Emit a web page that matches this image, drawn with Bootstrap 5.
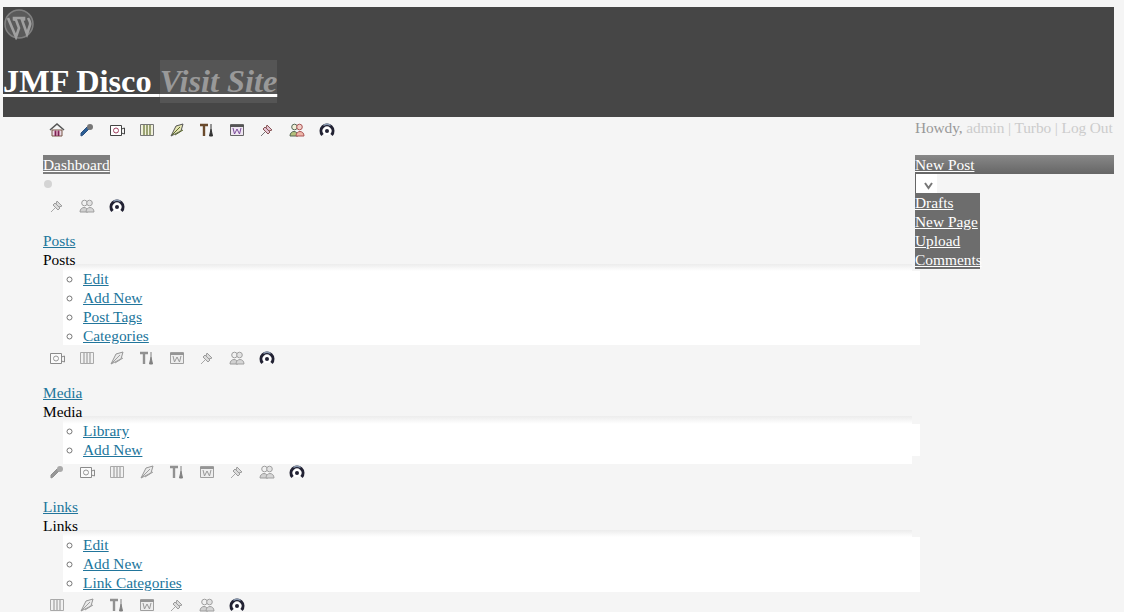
<!DOCTYPE html>
<html lang="en">
<head>
  <meta charset="UTF-8">
  <title>JMF Disco</title>
  <meta name="viewport" content="width=device-width, initial-scale=1">
  <link href="https://cdn.jsdelivr.net/npm/bootstrap@5.3.3/dist/css/bootstrap.min.css" rel="stylesheet">
  <style>
    html, body { height: 612px; overflow: hidden; }
    body { background: #f5f5f5; color: #000; font: 15.4px/19px "Liberation Serif", "Times New Roman", serif; padding: 7px 10px 0 3px; }
    a { color: #21759b; }
    .wp-head { background: #464646; height: 110px; padding-top: 1px; }
    .wp-logo { display: block; width: 32px; height: 32px; }
    .wp-title { color: #fff; font: bold 32.3px/37px "Liberation Serif", serif; margin: 23px 0 0; }
    .wp-title a { color: #fff; }
    .wp-visit { background: #555; color: #999; font-style: italic; padding: 3px 0 4px; }
    .wp-left { width: 917px; margin-right: -5px; padding-left: 40px; flex: none; }
    .wp-right { width: 199px; flex: none; position: relative; color: #999; }
    .wp-icons { height: 26px; padding-left: 6px; gap: 14px; align-items: center; }
    .wp-icons svg { width: 16px; height: 16px; flex: none; }
    .wp-muted svg:not(:last-child) { filter: grayscale(1) opacity(.6); }
    .wp-sect { margin-top: 12px; }
    .wp-sub { margin: -5px 0 0 20px; padding: 5px 0 0 20px; list-style: circle;
      background: linear-gradient(#ececec, #fff) no-repeat 0 0 / calc(100% - 8px) 7px,
                  linear-gradient(#fff, #fff) no-repeat 0 7px / 100% 100%; }
    .wp-sub-media { margin-bottom: -5px; padding-bottom: 5px;
      background: linear-gradient(#ececec, #fff) no-repeat 0 0 / calc(100% - 8px) 8px,
                  linear-gradient(#fff, #fff) no-repeat 0 8px / 100% calc(100% - 16px),
                  linear-gradient(#fff, #fff) no-repeat 0 100% / calc(100% - 8px) 8px; }
    .wp-sub li::marker { color: #777; }
    .wp-current { background: #7d7d7d; color: #fff; display: inline-block; }
    .wp-dot { width: 8px; height: 8px; background: #d4d4d4; border-radius: 50%; margin: 6px 0 5px 1px; }
    .wp-howdy { height: 38px; padding-top: 1px; white-space: nowrap; letter-spacing: -.1px; }
    .wp-howdy a { color: #ccc; text-decoration: none; }
    .wp-sep { color: #ccc; }
    .wp-newpost { background: linear-gradient(#888, #666); height: 19px; }
    .wp-newpost a, .wp-menu a { color: #fff; }
    .wp-toggle { background: #fff; border-left: 1px solid #666; width: 22px; height: 19px; padding: 8px 0 0 8px; }
    .wp-toggle svg { display: block; width: 9px; height: 8px; }
    .wp-menu { background: #6d6d6d; width: 65px; white-space: nowrap; }
  </style>
</head>
<body>
  <!-- icon set, used by the rows below -->
  <svg width="0" height="0" class="position-absolute">
    <symbol id="i0" viewBox="0 0 16 16"><path d="M1 8 8 2l7 6" fill="none" stroke="#555" stroke-width="1.6"/><path d="M3 8h10v6H3z" fill="#eadbe6" stroke="#754"/><path d="M6 14V9h1v5M9 14V9h1v5" stroke="#a0306a"/></symbol>
    <symbol id="i1" viewBox="0 0 16 16"><path d="M2 14l2-1 6-6-2-2-6 6z" fill="#2b5f95" stroke="#2b4f80"/><circle cx="11" cy="5" r="3" fill="#777"/></symbol>
    <symbol id="i2" viewBox="0 0 16 16"><path d="M1.500 3.500h11v10h-11z" fill="#fff" stroke="#444"/><circle cx="7" cy="8.500" r="2.500" fill="none" stroke="#a04060"/><path d="M12.500 7l3-1v6l-3-1" fill="none" stroke="#444"/></symbol>
    <symbol id="i3" viewBox="0 0 16 16"><path d="M1.500 2.500h13v11h-13z" fill="#f0f0dc" stroke="#777"/><path d="M5 3v10M8 3v10M11 3v10" stroke="#6e7a3c" stroke-width="1.300"/></symbol>
    <symbol id="i4" viewBox="0 0 16 16"><path d="M2 14 7 4l7-2-2 7z" fill="#e6e6b4" stroke="#555"/><path d="M3 13 11 5M6 13l8-5" stroke="#5a6a2c"/></symbol>
    <symbol id="i5" viewBox="0 0 16 16"><path d="M1 3h8M5 3v11" stroke="#6a4a2c" stroke-width="2.400" fill="none"/><path d="M12 2v5M12 7l-1.500 7h3z" stroke="#333" fill="#333"/></symbol>
    <symbol id="i6" viewBox="0 0 16 16"><path d="M1.500 2.500h13v11h-13z" fill="#efe6f2" stroke="#666"/><path d="M1 4h14" stroke="#555" stroke-width="2"/><path d="M4 6l1.500 6L8 7l2.500 5L12 6" fill="none" stroke="#7a4a9a"/></symbol>
    <symbol id="i7" viewBox="0 0 16 16"><path d="M2 14l4-4" stroke="#777"/><path d="M6 5l5 5-2 2-5-5zM8 3l5 5-3 1-3-3z" fill="#e3c3d2" stroke="#855"/></symbol>
    <symbol id="i8" viewBox="0 0 16 16"><circle cx="5.500" cy="5" r="2.800" fill="#f0f0d8" stroke="#565"/><circle cx="10.500" cy="5" r="2.800" fill="#f2cfc8" stroke="#a55"/><path d="M1 14c0-6 8-6 8 0z" fill="#b4c07c" stroke="#565"/><path d="M7 14c0-6 8-6 8 0z" fill="#eeb6aa" stroke="#a55"/></symbol>
    <symbol id="i9" viewBox="0 0 16 16"><path d="M3.500 13a6 6 0 1 1 9 0" fill="#fff" stroke="#223" stroke-width="3"/><path d="M4.500 3.500a6 6 0 0 1 7 0" fill="none" stroke="#8a9ab0" stroke-width="1.400"/><circle cx="8" cy="9" r="2" fill="#223"/></symbol>
  </svg>

  <div class="wp-head">
    <svg class="wp-logo" viewBox="0 0 32 32">
      <circle cx="16" cy="16" r="14" fill="#5a5a5a" stroke="#808080" stroke-width="1.500"/>
      <path d="M5 10l8 19 3-9-3-8-2-.5V10h10v1.500l-2 .5 5 14 3-9c1-3-1-5-2-7" fill="none" stroke="#a0a0a0" stroke-width="2.600"/>
    </svg>
    <h1 class="wp-title"><a href="#">JMF Disco <span class="wp-visit">Visit Site</span></a></h1>
  </div>

  <div class="d-flex">
    <div class="wp-left">
      <div class="wp-icons d-flex" data-from="0"></div>
      <div class="wp-sect"><a href="#" class="wp-current">Dashboard</a></div>
      <div class="wp-dot"></div>
      <div class="wp-icons wp-muted d-flex" data-from="7"></div>

      <div class="wp-sect"><a href="#">Posts</a></div>
      <div>Posts</div>
      <ul class="wp-sub">
        <li><a href="#">Edit</a></li>
        <li><a href="#">Add New</a></li>
        <li><a href="#">Post Tags</a></li>
        <li><a href="#">Categories</a></li>
      </ul>
      <div class="wp-icons wp-muted d-flex" data-from="2"></div>

      <div class="wp-sect"><a href="#">Media</a></div>
      <div>Media</div>
      <ul class="wp-sub wp-sub-media">
        <li><a href="#">Library</a></li>
        <li><a href="#">Add New</a></li>
      </ul>
      <div class="wp-icons wp-muted d-flex" data-from="1"></div>

      <div class="wp-sect"><a href="#">Links</a></div>
      <div>Links</div>
      <ul class="wp-sub">
        <li><a href="#">Edit</a></li>
        <li><a href="#">Add New</a></li>
        <li><a href="#">Link Categories</a></li>
      </ul>
      <div class="wp-icons wp-muted d-flex" data-from="3"></div>
    </div>

    <div class="wp-right">
      <div class="wp-howdy">Howdy, <a href="#">admin</a> <span class="wp-sep">|</span> <a href="#">Turbo</a> <span class="wp-sep">|</span> <a href="#">Log Out</a></div>
      <div class="wp-newpost"><a href="#">New Post</a></div>
      <div class="wp-toggle"><svg viewBox="0 0 9 8"><path d="M1 1l3.500 5L8 1" fill="none" stroke="#777" stroke-width="2"/></svg></div>
      <div class="wp-menu">
        <div><a href="#">Drafts</a></div>
        <div><a href="#">New Page</a></div>
        <div><a href="#">Upload</a></div>
        <div><a href="#">Comments</a></div>
      </div>
    </div>
  </div>

  <script>
    // Fills each icon row, from its start icon to the last one of the set
    document.querySelectorAll('.wp-icons').forEach(function (row) {
      const from = Number(row.dataset.from);
      let html = '';
      for (let i = from; i < 10; i++) {
        html += '<svg><use href="#i' + i + '"></use></svg>';
      }
      row.innerHTML = html;
    });
  </script>
</body>
</html>
